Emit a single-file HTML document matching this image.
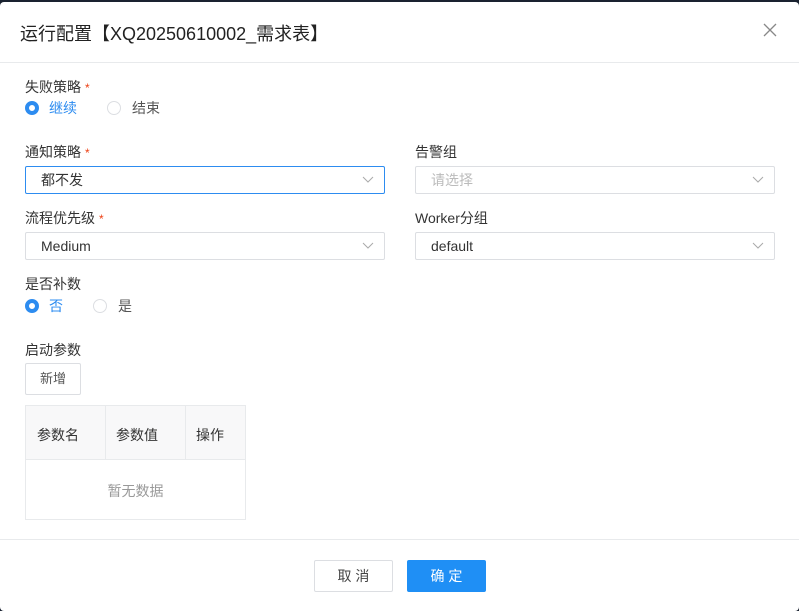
<!DOCTYPE html><html><head><meta charset="utf-8"><style>
*{box-sizing:border-box;margin:0;padding:0}
body{width:799px;height:611px;background:#1a2230;font-family:"Liberation Sans","Noto Sans CJK SC",sans-serif;position:relative;overflow:hidden;color:#333}
.dlg{position:absolute;left:0;top:2px;width:799px;height:609px;background:#fff;border-radius:4px}
.a{position:absolute}
.lbl{font-size:14px;color:#333}
.req{color:#ed4014;font-size:12px;margin-left:4px}
.sel{position:absolute;height:28px;border:1px solid #dcdee2;border-radius:2px;font-size:14px;padding-left:15px;line-height:26px;color:#333}
.sel svg{position:absolute;right:10px;top:9px}
.radio{position:absolute;width:14px;height:14px;border-radius:50%;border:1px solid #dcdee2}
.radio.on{border:4px solid #2d8cf0}
.btn{position:absolute;height:32px;border:1px solid #dcdee2;border-radius:2px;font-size:14px;text-align:center;line-height:30px}
</style></head><body><div class="dlg">
<div class="a" style="left:20px;top:18px;font-size:18px;color:#222">运行配置【XQ20250610002_需求表】</div>
<svg class="a" style="left:763px;top:21px" width="14" height="14"><path d="M1 1L13 13M13 1L1 13" stroke="#888" stroke-width="1.3"/></svg>
<div class="a" style="left:0;top:60px;width:799px;height:1px;background:#e8eaec"></div>
<div class="a lbl" style="left:25px;top:75px">失败策略<span class="req">*</span></div>
<div class="radio on" style="left:25px;top:99px"></div><div class="a lbl" style="left:49px;top:96px;color:#2d8cf0">继续</div>
<div class="radio" style="left:107px;top:99px"></div><div class="a lbl" style="left:132px;top:96px;color:#555">结束</div>
<div class="a lbl" style="left:25px;top:140px">通知策略<span class="req">*</span></div>
<div class="sel" style="left:25px;top:164px;width:360px;border-color:#2d8cf0">都不发<svg width="12" height="8"><path d="M1 1L6 6L11 1" fill="none" stroke="#aaa"/></svg></div>
<div class="a lbl" style="left:415px;top:140px">告警组</div>
<div class="sel" style="left:415px;top:164px;width:360px;color:#bbb">请选择<svg width="12" height="8"><path d="M1 1L6 6L11 1" fill="none" stroke="#aaa"/></svg></div>
<div class="a lbl" style="left:25px;top:206px">流程优先级<span class="req">*</span></div>
<div class="sel" style="left:25px;top:230px;width:360px">Medium<svg width="12" height="8"><path d="M1 1L6 6L11 1" fill="none" stroke="#aaa"/></svg></div>
<div class="a lbl" style="left:415px;top:206px">Worker分组</div>
<div class="sel" style="left:415px;top:230px;width:360px">default<svg width="12" height="8"><path d="M1 1L6 6L11 1" fill="none" stroke="#aaa"/></svg></div>
<div class="a lbl" style="left:25px;top:272px">是否补数</div>
<div class="radio on" style="left:25px;top:297px"></div><div class="a lbl" style="left:49px;top:294px;color:#2d8cf0">否</div>
<div class="radio" style="left:93px;top:297px"></div><div class="a lbl" style="left:118px;top:294px;color:#555">是</div>
<div class="a lbl" style="left:25px;top:338px">启动参数</div>
<div class="btn" style="left:25px;top:361px;width:56px;font-size:13px;color:#555">新增</div>
<div class="a" style="left:25px;top:403px;width:221px;height:115px;border:1px solid #e8eaec">
<div class="a" style="left:0;top:0;width:219px;height:54px;background:#f8f8f9;border-bottom:1px solid #e8eaec"></div>
<div class="a" style="left:79px;top:0;width:1px;height:54px;background:#e8eaec"></div>
<div class="a" style="left:159px;top:0;width:1px;height:54px;background:#e8eaec"></div>
<div class="a lbl" style="left:11px;top:19px">参数名</div><div class="a lbl" style="left:90px;top:19px">参数值</div><div class="a lbl" style="left:170px;top:19px">操作</div>
<div class="a lbl" style="left:0;width:219px;text-align:center;top:75px;color:#999">暂无数据</div>
</div>
<div class="a" style="left:0;top:537px;width:799px;height:1px;background:#e8eaec"></div>
<div class="btn" style="left:314px;top:558px;width:79px;color:#444">取 消</div>
<div class="btn" style="left:407px;top:558px;width:79px;background:#1f8ff5;border-color:#1f8ff5;color:#fff">确 定</div>
</div></body></html>
